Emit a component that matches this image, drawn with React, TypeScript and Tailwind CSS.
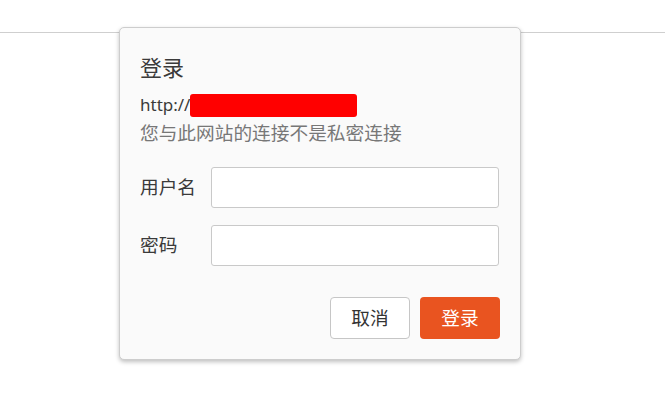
export default function App() {
  return (
    <div className="relative w-[665px] h-[400px] bg-white overflow-hidden font-['Noto_Sans','Noto_Sans_CJK_SC',sans-serif]">
      {/* top bar line behind the dialog */}
      <div className="h-[33px] border-b border-[#cfcfcf]" />

      {/* Login dialog */}
      <div className="absolute left-[119px] top-[27px] w-[402px] bg-[#fafafa] border border-[#cdcdcd] rounded-[5px] shadow-[0_2px_4px_rgba(0,0,0,0.25)] px-[20px] pt-[25px] pb-[20px] text-[#3a3a3a]">
        <h2 className="text-[22px] leading-[28px]">登录</h2>
        <div className="mt-[10px] text-[17px] leading-[28px] flex items-center">
          <span>http://</span>
          <span className="inline-block w-[167px] h-[23px] bg-[#ff0000] rounded-[3px]" />
        </div>
        <p className="text-[18.7px] leading-[28px] text-[#777]">您与此网站的连接不是私密连接</p>

        <div className="mt-[20px] grid grid-cols-[71px_minmax(0,1fr)] gap-y-[17px] items-center text-[18.7px]">
          <label>用户名</label>
          <input type="text" className="w-[288px] min-w-0 h-[41px] bg-white border border-[#c9c9c9] rounded-[3px] outline-none px-2" />
          <label>密码</label>
          <input type="password" className="w-[288px] min-w-0 h-[41px] bg-white border border-[#c9c9c9] rounded-[3px] outline-none px-2" />
        </div>

        <div className="mt-[31px] flex justify-end gap-[10px]">
          <button className="w-[80px] h-[42px] bg-white border border-[#c6c6c6] rounded-[4px] text-[18.7px] text-[#333]">取消</button>
          <button className="w-[80px] h-[42px] bg-[#e95420] rounded-[4px] text-[18.7px] text-white">登录</button>
        </div>
      </div>
    </div>
  );
}
